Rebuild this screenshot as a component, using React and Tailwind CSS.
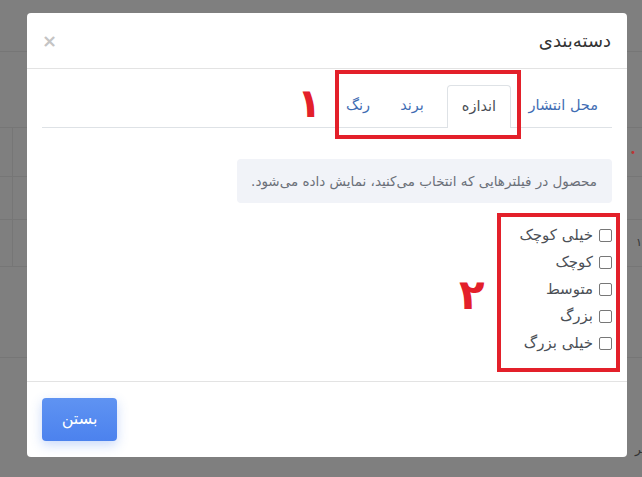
import React from "react";

const font = { fontFamily: '"DejaVu Sans", "Noto Sans", sans-serif' };

function Check({ label }) {
  return (
    <label className="flex h-[27px] items-center gap-[6px] text-[15px] text-[#4b4f56]">
      <span className="block h-[13px] w-[13px] rounded-[2px] border border-[#777] bg-white" />
      <span>{label}</span>
    </label>
  );
}

export default function App() {
  return (
    <div className="relative h-[477px] w-[642px] overflow-hidden bg-[#7f7f7f]" style={font}>
      {/* faint page behind the backdrop */}
      <div className="flex flex-col">
        <div className="h-[52px] border-b border-[#767676]" />
        <div className="h-[76px] border-b border-[#767676]" />
        <div className="flex h-[49px] border-b border-[#767676]">
          <div className="w-[13px] border-r border-[#767676]" />
          <div className="flex-1" />
          <div className="flex w-[12px] items-center text-[10px] text-[#b33]">•</div>
        </div>
        <div className="flex h-[43px] border-b border-[#767676]">
          <div className="w-[13px] border-r border-[#767676]" />
        </div>
        <div className="flex h-[47px] border-b border-[#767676]">
          <div className="w-[13px] border-r border-[#767676]" />
          <div className="flex-1" />
          <div className="flex w-[6px] items-center text-[11px] text-[#333]">۱</div>
        </div>
        <div className="h-[91px] border-b border-[#767676]" />
        <div className="flex h-[118px] items-start justify-end pt-[82px] text-[12px] text-[#333]">
          <span className="mr-[-3px]">یر</span>
        </div>
      </div>

      {/* modal */}
      <div
        dir="rtl"
        className="absolute left-[27px] top-[13px] flex h-[444px] w-[600px] flex-col rounded-[4px] bg-white"
      >
        <div className="flex h-[56px] shrink-0 items-center justify-between border-b border-[#e3e3e3] pl-[15px] pr-[16px]">
          <div className="text-[18px] text-[#333]">دسته‌بندی</div>
          <div className="text-[18px] font-bold leading-none text-[#c4c4c4]">×</div>
        </div>

        <div className="flex flex-1 flex-col px-[15px] pt-[17px]">
          <div className="flex h-[42px] items-end border-b border-[#dee2e6] text-[14.5px]">
            <div className="flex h-[42px] w-[101px] items-center justify-start pr-[14px] text-[#3f6db3]">محل انتشار</div>
            <div className="flex h-[43px] w-[64px] translate-y-[1px] items-center justify-center rounded-t-[4px] border border-b-0 border-[#dee2e6] bg-white text-[#4a4f55]">
              اندازه
            </div>
            <div className="flex h-[42px] w-[70px] items-center justify-center text-[#3f6db3]">برند</div>
            <div className="flex h-[42px] w-[38px] items-center justify-center text-[#3f6db3]">رنگ</div>
          </div>

          <div className="mt-[31px] flex h-[44px] w-[375px] items-center rounded-[4px] bg-[#f1f3f8] pr-[15px] text-[13.5px] text-[#6b7079]">
            محصول در فیلترهایی که انتخاب می‌کنید، نمایش داده می‌شود.
          </div>

          <div className="mt-[19px] flex flex-col items-start">
            <Check label="خیلی کوچک" />
            <Check label="کوچک" />
            <Check label="متوسط" />
            <Check label="بزرگ" />
            <Check label="خیلی بزرگ" />
          </div>
        </div>

        <div className="flex h-[76px] shrink-0 items-center justify-end border-t border-[#e3e3e3] pl-[15px]">
          <button className="mt-[-1px] h-[43px] w-[75px] rounded-[4px] bg-gradient-to-b from-[#5f93f2] to-[#4c82ee] text-[16px] text-white shadow-[0_4px_12px_rgba(76,130,238,0.3)]">
            بستن
          </button>
        </div>

        {/* annotations */}
        <div className="pointer-events-none absolute left-[308px] top-[57px] h-[69px] w-[186px] border-[4px] border-[#e3202a]" />
        <div className="pointer-events-none absolute left-[470px] top-[200px] h-[159px] w-[123px] border-[4px] border-[#e3202a]" />
        <div className="pointer-events-none absolute left-[270px] top-[70px] text-[40px] font-bold leading-none text-[#e3202a]">۱</div>
        <div className="pointer-events-none absolute left-[432px] top-[261px] text-[42px] font-bold leading-none text-[#e3202a]">۲</div>
      </div>
    </div>
  );
}
